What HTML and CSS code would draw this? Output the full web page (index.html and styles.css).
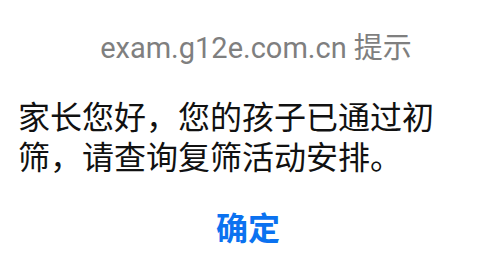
FILE: index.html
```html
<!DOCTYPE html>
<html lang="zh-CN">
<head>
<meta charset="utf-8">
<link rel="stylesheet" href="styles.css">
</head>
<body>
<div class="dialog">
  <div class="dialog-title">exam.g12e.com.cn 提示</div>
  <div class="dialog-message">家长您好，您的孩子已通过初筛，请查询复筛活动安排。</div>
  <div class="dialog-actions">
    <span class="dialog-button">确定</span>
  </div>
</div>
</body>
</html>
```

FILE: styles.css
```css
html, body {
  margin: 0;
  padding: 0;
  background: #ffffff;
}

.dialog {
  width: 496px;
  height: 260px;
  box-sizing: border-box;
  padding-top: 31px;
  display: flex;
  flex-direction: column;
  font-family: "Noto Sans CJK SC", sans-serif;
}

.dialog-title {
  font-family: Roboto, "Noto Sans CJK SC", sans-serif;
  font-size: 29px;
  line-height: 34px;
  color: #7f7f7f;
  text-align: center;
  padding-left: 16px;
}

.dialog-message {
  margin-top: 30px;
  padding: 0 48px 0 18px;
  font-size: 32px;
  line-height: 40px;
  color: #111111;
}

.dialog-actions {
  margin-top: 31px;
  display: flex;
  justify-content: center;
}

.dialog-button {
  font-size: 32px;
  line-height: 40px;
  font-weight: bold;
  color: #0b72f0;
}
```
